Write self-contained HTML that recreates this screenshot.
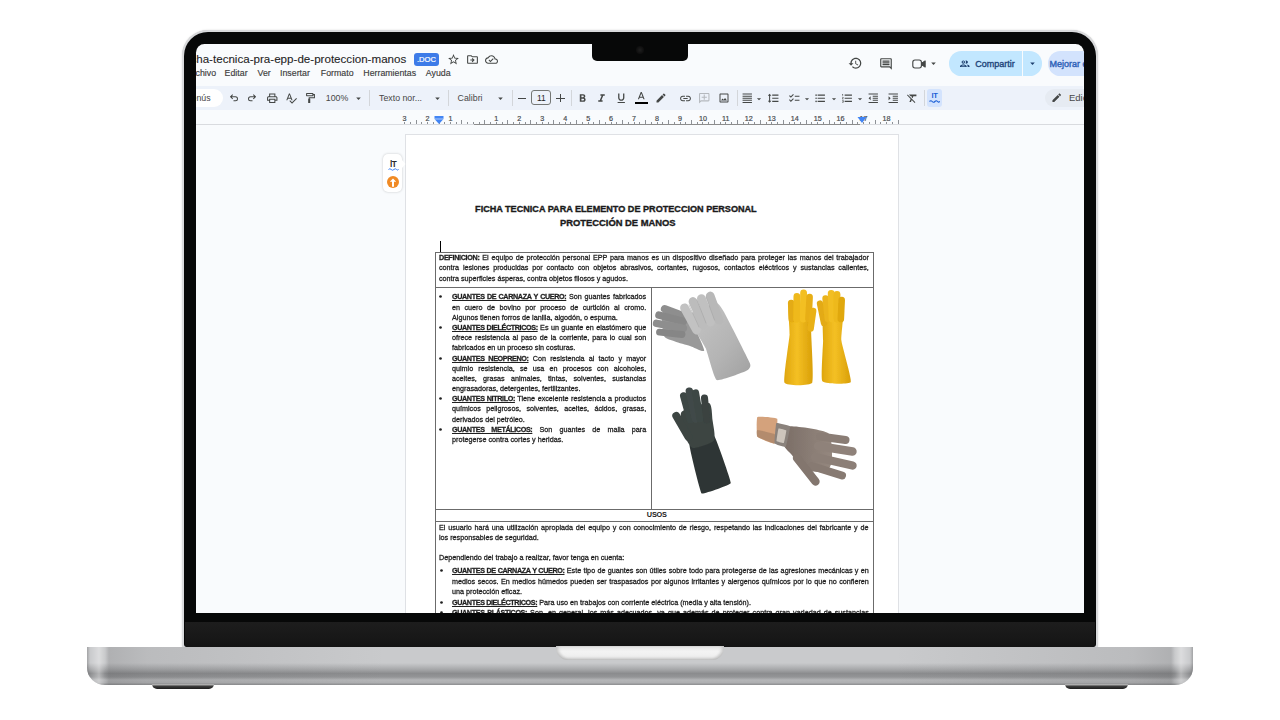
<!DOCTYPE html>
<html><head><meta charset="utf-8"><style>
html,body{margin:0;padding:0;}
body{width:1280px;height:720px;position:relative;overflow:hidden;background:#fff;font-family:"Liberation Sans",sans-serif;}
svg{display:block;}
</style></head><body>

<div style="position:absolute;left:182px;top:30px;width:916px;height:618px;background:#d9dadc;border-radius:26px 26px 3px 3px;box-shadow:0 0 1.2px rgba(120,120,120,.5);"></div>
<div style="position:absolute;left:184px;top:32px;width:912px;height:615px;background:#070808;border-radius:24px 24px 3px 3px;"></div>
<div style="position:absolute;left:185px;top:622px;width:910px;height:24.5px;background:linear-gradient(to bottom,#1d1d1d,#181818 60%,#131313);border-radius:0 0 3px 3px;"></div>
<div style="position:absolute;left:87px;top:647px;width:1106px;height:37.5px;border-radius:0 0 18px 18px / 0 0 17px 17px;background:linear-gradient(to bottom,#c9cacc 0px,#c9cacc 16px,#a9aaac 22px,#8b8c8e 26.5px,#949597 30px,#b5b6b8 33px,#afb0b2 35.5px,#939496 37.5px);"></div>
<div style="position:absolute;left:87px;top:647px;width:1106px;height:37.5px;border-radius:0 0 18px 18px / 0 0 17px 17px;background:linear-gradient(to right,rgba(60,60,62,.28) 0px,rgba(60,60,62,.0) 3px,rgba(255,255,255,.35) 12px,rgba(255,255,255,.0) 18px,rgba(60,60,62,.18) 22px,rgba(60,60,62,.10) 60px,rgba(60,60,62,.0) 300px,rgba(60,60,62,0) 806px,rgba(60,60,62,.10) 1046px,rgba(60,60,62,.18) 1084px,rgba(255,255,255,0) 1088px,rgba(255,255,255,.35) 1094px,rgba(60,60,62,0) 1103px,rgba(60,60,62,.28) 1106px);"></div>
<div style="position:absolute;left:556px;top:646px;width:168px;height:14px;border-radius:0 0 12px 12px / 0 0 12px 12px;background:linear-gradient(to bottom,#e8e8e8,#f3f3f3 40%,#ededed);box-shadow:inset 0 -2px 3px rgba(0,0,0,.12), inset 3px 0 3px rgba(0,0,0,.10), inset -3px 0 3px rgba(0,0,0,.10);"></div>
<div style="position:absolute;left:152px;top:684px;width:62px;height:5px;border-radius:0 0 6px 6px;background:linear-gradient(to bottom,#c9c9c9,#3a3a3a 50%,#1d1d1d);"></div>
<div style="position:absolute;left:1065px;top:684px;width:63px;height:5px;border-radius:0 0 6px 6px;background:linear-gradient(to bottom,#c9c9c9,#3a3a3a 50%,#1d1d1d);"></div>

<div id="scr" style="position:absolute;left:196px;top:44px;width:888px;height:568.5px;background:#f9fbfd;border-radius:8.5px 8.5px 0 0;overflow:hidden;">
<div style="position:absolute;left:-5.60px;top:8.30px;font-size:11.6px;line-height:13.328px;color:#1f1f1f;font-weight:normal;white-space:nowrap;-webkit-text-stroke:0.1px #1f1f1f;">cha-tecnica-pra-epp-de-proteccion-manos</div>
<div style="position:absolute;left:218.00px;top:9.00px;width:25.00px;height:13.00px;background:#3d7be8;border-radius:3px;"></div>
<div style="position:absolute;left:-69.50px;width:600px;text-align:center;top:11.92px;font-size:7.6px;line-height:8.732px;color:#ffffff;font-weight:normal;white-space:nowrap;-webkit-text-stroke:0.2px #fff;">.DOC</div>
<svg style="position:absolute;left:250.80px;top:9.20px;" width="13" height="13" viewBox="0 0 24 24"><path fill="#444746" d="M22 9.24l-7.19-.62L12 2 9.19 8.63 2 9.24l5.46 4.73L5.82 21 12 17.27 18.18 21l-1.63-7.03L22 9.24zM12 15.4l-3.76 2.27 1-4.28-3.32-2.88 4.380-.38L12 6.1l1.71 4.04 4.38.38-3.32 2.88 1 4.28L12 15.4z"/></svg>
<svg style="position:absolute;left:269.80px;top:9.20px;" width="13" height="13" viewBox="0 0 24 24"><path fill="#444746" d="M20 6h-8l-2-2H4c-1.1 0-2 .9-2 2v12c0 1.1.9 2 2 2h16c1.1 0 2-.9 2-2V8c0-1.1-.9-2-2-2zm0 12H4V6h5.17l2 2H20v10zm-7.84-6H8v2h4.16l-1.59 1.59L11.99 17 16 13.01 11.99 9l-1.41 1.41L12.16 12z"/></svg>
<svg style="position:absolute;left:289.20px;top:9.00px;" width="13" height="13" viewBox="0 0 24 24"><path fill="#444746" d="M19.35 10.04C18.67 6.59 15.640 4 12 4 9.11 4 6.6 5.64 5.35 8.04 2.34 8.36 0 10.91 0 14c0 3.31 2.69 6 6 6h13c2.76 0 5-2.24 5-5 0-2.64-2.05-4.78-4.65-4.96zM19 18H6c-2.21 0-4-1.79-4-4 0-2.05 1.53-3.76 3.56-3.97l1.07-.11.5-.95C8.08 7.14 9.94 6 12 6c2.62 0 4.88 1.86 5.39 4.43l.3 1.5 1.53.11c1.56.1 2.78 1.410 2.78 2.96 0 1.65-1.35 3-3 3zm-9-3.82l-2.09-2.09L6.5 13.5 10 17l6.01-6.01-1.42-1.41z"/></svg>
<div style="position:absolute;left:-3.40px;top:24.04px;font-size:8.8px;line-height:10.111px;color:#3c3c3c;font-weight:normal;white-space:nowrap;-webkit-text-stroke:0.15px #3c3c3c;">rchivo</div>
<div style="position:absolute;left:28.60px;top:24.04px;font-size:8.8px;line-height:10.111px;color:#3c3c3c;font-weight:normal;white-space:nowrap;-webkit-text-stroke:0.15px #3c3c3c;">Editar</div>
<div style="position:absolute;left:61.50px;top:24.04px;font-size:8.8px;line-height:10.111px;color:#3c3c3c;font-weight:normal;white-space:nowrap;-webkit-text-stroke:0.15px #3c3c3c;">Ver</div>
<div style="position:absolute;left:84.00px;top:24.04px;font-size:8.8px;line-height:10.111px;color:#3c3c3c;font-weight:normal;white-space:nowrap;-webkit-text-stroke:0.15px #3c3c3c;">Insertar</div>
<div style="position:absolute;left:124.80px;top:24.04px;font-size:8.8px;line-height:10.111px;color:#3c3c3c;font-weight:normal;white-space:nowrap;-webkit-text-stroke:0.15px #3c3c3c;">Formato</div>
<div style="position:absolute;left:167.30px;top:24.04px;font-size:8.8px;line-height:10.111px;color:#3c3c3c;font-weight:normal;white-space:nowrap;-webkit-text-stroke:0.15px #3c3c3c;">Herramientas</div>
<div style="position:absolute;left:229.80px;top:24.04px;font-size:8.8px;line-height:10.111px;color:#3c3c3c;font-weight:normal;white-space:nowrap;-webkit-text-stroke:0.15px #3c3c3c;">Ayuda</div>
<svg style="position:absolute;left:652.25px;top:12.25px;" width="14.5" height="14.5" viewBox="0 0 24 24"><path fill="#444746" d="M13 3c-4.97 0-9 4.03-9 9H1l3.89 3.89.07.14L9 12H6c0-3.87 3.13-7 7-7s7 3.13 7 7-3.13 7-7 7c-1.93 0-3.68-.79-4.94-2.06l-1.42 1.42C8.27 19.99 10.51 21 13 21c4.97 0 9-4.03 9-9s-4.03-9-9-9zm-1 5v5l4.28 2.54.72-1.21-3.5-2.08V8H12z"/></svg>
<svg style="position:absolute;left:682.80px;top:12.50px;" width="14" height="14" viewBox="0 0 24 24"><path fill="#444746" d="M21.99 4c0-1.1-.89-2-1.99-2H4c-1.1 0-2 .9-2 2v12c0 1.1.9 2 2 2h14l4 4-.01-18zM20 4v13.17L18.83 16H4V4h16zM6 12h12v2H6zm0-3h12v2H6zm0-3h12v2H6z"/></svg>
<svg style="position:absolute;left:714.5px;top:11.5px" width="16" height="16" viewBox="0 0 16 16"><rect x="1.8" y="4" width="8.6" height="8" rx="2.2" fill="none" stroke="#444746" stroke-width="1.15"/><path d="M10.4 7.3L14.2 4.8V11.2L10.4 8.7" fill="#444746" stroke="#444746" stroke-width="1" stroke-linejoin="round"/></svg>
<svg style="position:absolute;left:731.50px;top:14.00px;" width="11" height="11" viewBox="0 0 24 24"><path fill="#444746" d="M7 10l5 5 5-5z"/></svg>
<div style="position:absolute;left:753.30px;top:7.20px;width:93.00px;height:24.60px;background:#c2e7ff;border-radius:12.3px;"></div>
<div style="position:absolute;left:826.30px;top:7.20px;width:0.80px;height:24.60px;background:#f9fbfd;"></div>
<svg style="position:absolute;left:762.75px;top:13.75px;" width="11.5" height="11.5" viewBox="0 0 24 24"><path fill="#1d3f6e" d="M9 13.75c-2.34 0-7 1.17-7 3.5V19h14v-1.75c0-2.33-4.66-3.5-7-3.5zM4.34 17c.84-.58 2.87-1.25 4.66-1.25s3.82.67 4.66 1.25H4.34zM9 12c1.93 0 3.5-1.57 3.5-3.5S10.930 5 9 5 5.5 6.57 5.5 8.5 7.07 12 9 12zm0-5c.83 0 1.5.67 1.5 1.5S9.83 10 9 10s-1.5-.67-1.5-1.5S8.17 7 9 7zm7.04 6.81c1.16.84 1.96 1.96 1.96 3.44V19h4v-1.75c0-2.02-3.5-3.17-5.96-3.44zM15 12c1.93 0 3.5-1.57 3.5-3.5S16.93 5 15 5c-.54 0-1.040.13-1.5.35.63.89 1 1.98 1 3.15s-.37 2.26-1 3.15c.46.22.96.35 1.5.35z"/></svg>
<div style="position:absolute;left:779.30px;top:14.66px;font-size:9.0px;line-height:10.341px;color:#22467a;font-weight:normal;white-space:nowrap;-webkit-text-stroke:0.35px #22467a;">Compartir</div>
<svg style="position:absolute;left:831.00px;top:14.30px;" width="11" height="11" viewBox="0 0 24 24"><path fill="#1d3f6e" d="M7 10l5 5 5-5z"/></svg>
<div style="position:absolute;left:851.50px;top:7.20px;width:60.00px;height:24.60px;background:#d3e3fd;border-radius:12.3px;"></div>
<div style="position:absolute;left:853.50px;top:14.66px;font-size:9.0px;line-height:10.341px;color:#2f62b8;font-weight:normal;white-space:nowrap;-webkit-text-stroke:0.4px #2f62b8;">Mejorar e</div>
<div style="position:absolute;left:0.00px;top:41.50px;width:887.00px;height:24.50px;background:#edf2fa;"></div>
<div style="position:absolute;left:-16.00px;top:45.00px;width:43.00px;height:17.50px;background:#ffffff;border-radius:9px;"></div>
<div style="position:absolute;left:-4.50px;top:49.24px;font-size:8.8px;line-height:10.111px;color:#474747;font-weight:normal;white-space:nowrap;">enús</div>
<svg style="position:absolute;left:31.50px;top:48.30px;" width="12" height="12" viewBox="0 0 24 24"><path fill="#444746" d="M7.5 8.5H15a5 5 0 0 1 0 10H11v-2h4a3 3 0 0 0 0-6H7.5l2.6 2.6-1.4 1.4L3.7 9.5l5-5 1.4 1.4z"/></svg>
<svg style="position:absolute;left:50.30px;top:48.30px;" width="12" height="12" viewBox="0 0 24 24"><path fill="#444746" d="M16.5 8.5H9a5 5 0 0 0 0 10h4v-2H9a3 3 0 0 1 0-6h7.5l-2.6 2.6 1.4 1.4 5-5-5-5-1.4 1.4z"/></svg>
<svg style="position:absolute;left:69.75px;top:48.05px;" width="12.5" height="12.5" viewBox="0 0 24 24"><path fill="#444746" d="M19 8h-1V3H6v5H5c-1.66 0-3 1.34-3 3v6h4v4h12v-4h4v-6c0-1.66-1.34-3-3-3zM8 5h8v3H8V5zm8 14H8v-4h8v4zm2-4v-2H6v2H4v-4c0-.55.45-1 1-1h14c.55 0 1 .45 1 1v4h-2z"/></svg>
<svg style="position:absolute;left:89.45px;top:48.05px;" width="12.5" height="12.5" viewBox="0 0 24 24"><path fill="#444746" d="M12.45 16h2.09L9.43 3H7.57L2.46 16h2.09l1.12-3h5.64l1.14 3zm-6.02-5L8.5 5.48 10.57 11H6.43zm15.16.59l-8.09 8.09L9.83 16l-1.41 1.41 5.09 5.09L23 13l-1.41-1.41z"/></svg>
<svg style="position:absolute;left:108.15px;top:48.05px;" width="12.5" height="12.5" viewBox="0 0 24 24"><path fill="#444746" d="M18 4V3c0-.55-.45-1-1-1H5c-.55 0-1 .45-1 1v4c0 .55.45 1 1 1h12c.55 0 1-.45 1-1V6h1v4H9v3H8v8h4v-8h-1v-1h10V4h-3zm-2 2H6V4h10v2z"/></svg>
<div style="position:absolute;left:129.80px;top:49.34px;font-size:8.8px;line-height:10.111px;color:#474747;font-weight:normal;white-space:nowrap;">100%</div>
<svg style="position:absolute;left:157.00px;top:49.00px;" width="11" height="11" viewBox="0 0 24 24"><path fill="#444746" d="M7 10l5 5 5-5z"/></svg>
<div style="position:absolute;left:173.00px;top:46.00px;width:0.80px;height:16.00px;background:#d3d6da;"></div>
<div style="position:absolute;left:252.20px;top:46.00px;width:0.80px;height:16.00px;background:#d3d6da;"></div>
<div style="position:absolute;left:316.00px;top:46.00px;width:0.80px;height:16.00px;background:#d3d6da;"></div>
<div style="position:absolute;left:374.70px;top:46.00px;width:0.80px;height:16.00px;background:#d3d6da;"></div>
<div style="position:absolute;left:541.00px;top:46.00px;width:0.80px;height:16.00px;background:#d3d6da;"></div>
<div style="position:absolute;left:727.80px;top:46.00px;width:0.80px;height:16.00px;background:#d3d6da;"></div>
<div style="position:absolute;left:183.00px;top:49.34px;font-size:8.8px;line-height:10.111px;color:#474747;font-weight:normal;white-space:nowrap;">Texto nor...</div>
<svg style="position:absolute;left:235.50px;top:49.00px;" width="11" height="11" viewBox="0 0 24 24"><path fill="#444746" d="M7 10l5 5 5-5z"/></svg>
<div style="position:absolute;left:261.60px;top:49.34px;font-size:8.8px;line-height:10.111px;color:#474747;font-weight:normal;white-space:nowrap;">Calibri</div>
<svg style="position:absolute;left:298.90px;top:49.00px;" width="11" height="11" viewBox="0 0 24 24"><path fill="#444746" d="M7 10l5 5 5-5z"/></svg>
<div style="position:absolute;left:321.50px;top:53.80px;width:8.50px;height:1.00px;background:#444746;"></div>
<div style="position:absolute;left:335.30px;top:46.20px;width:20.10px;height:14.40px;border:1px solid #747775;border-radius:3px;box-sizing:border-box;"></div>
<div style="position:absolute;left:45.30px;width:600px;text-align:center;top:49.61px;font-size:8.5px;line-height:9.767px;color:#1f1f1f;font-weight:normal;white-space:nowrap;">11</div>
<div style="position:absolute;left:360.00px;top:53.80px;width:8.50px;height:1.00px;background:#444746;"></div>
<div style="position:absolute;left:363.75px;top:49.55px;width:1.00px;height:8.50px;background:#444746;"></div>
<svg style="position:absolute;left:379.80px;top:47.80px;" width="13" height="13" viewBox="0 0 24 24"><path fill="#444746" d="M15.6 10.79c.97-.67 1.65-1.77 1.65-2.79 0-2.26-1.75-4-4-4H7v14h7.04c2.09 0 3.71-1.7 3.71-3.79 0-1.52-.86-2.82-2.15-3.42zM10 6.5h3c.83 0 1.5.67 1.5 1.5s-.67 1.5-1.5 1.5h-3v-3zm3.5 9H10v-3h3.5c.83 0 1.5.67 1.5 1.5s-.67 1.5-1.5 1.5z"/></svg>
<svg style="position:absolute;left:398.50px;top:47.80px;" width="13" height="13" viewBox="0 0 24 24"><path fill="#444746" d="M10 4v3h2.21l-3.42 8H6v3h8v-3h-2.21l3.42-8H18V4z"/></svg>
<svg style="position:absolute;left:418.55px;top:48.05px;" width="12.5" height="12.5" viewBox="0 0 24 24"><path fill="#444746" d="M12 17c3.31 0 6-2.69 6-6V3h-2.5v8c0 1.93-1.57 3.5-3.5 3.5S8.5 12.93 8.5 11V3H6v8c0 3.31 2.69 6 6 6zm-7 2v2h14v-2H5z"/></svg>
<svg style="position:absolute;left:438.75px;top:47.05px;" width="12.5" height="12.5" viewBox="0 0 24 24"><path fill="#444746" d="M11 2L5.5 16h2.25l1.12-3h6.25l1.12 3h2.25L13 2h-2zm-1.38 9L12 4.67 14.38 11H9.62z"/></svg>
<div style="position:absolute;left:438.50px;top:57.50px;width:13.00px;height:2.00px;background:#000;"></div>
<svg style="position:absolute;left:459.00px;top:47.80px;" width="12" height="12" viewBox="0 0 24 24"><path fill="#444746" d="M20.71 7.04c.39-.39.39-1.04 0-1.41l-2.34-2.34c-.37-.39-1.02-.39-1.41 0l-1.84 1.83 3.75 3.75M3 17.25V21h3.75L17.81 9.93l-3.75-3.75L3 17.25z"/></svg>
<svg style="position:absolute;left:482.90px;top:47.80px;" width="13" height="13" viewBox="0 0 24 24"><path fill="#444746" d="M3.9 12c0-1.71 1.39-3.1 3.1-3.1h4V7H7c-2.76 0-5 2.24-5 5s2.24 5 5 5h4v-1.9H7c-1.71 0-3.1-1.39-3.1-3.1zM8 13h8v-2H8v2zm9-6h-4v1.9h4c1.71 0 3.1 1.39 3.1 3.1s-1.39 3.1-3.1 3.1h-4V17h4c2.76 0 5-2.24 5-5s-2.24-5-5-5z"/></svg>
<svg style="position:absolute;left:502.45px;top:48.05px;" width="12.5" height="12.5" viewBox="0 0 24 24"><path fill="#b5b9be" d="M20 2H4c-1.1 0-2 .9-2 2v18l4-4h14c1.1 0 2-.9 2-2V4c0-1.1-.9-2-2-2zm0 14H5.17L4 17.17V4h16v12zM11 5h2v4h4v2h-4v4h-2v-4H7V9h4z"/></svg>
<svg style="position:absolute;left:522.40px;top:48.30px;" width="12" height="12" viewBox="0 0 24 24"><path fill="#444746" d="M19 3H5c-1.1 0-2 .9-2 2v14c0 1.1.9 2 2 2h14c1.1 0 2-.9 2-2V5c0-1.1-.9-2-2-2zm0 16H5V5h14v14zm-4.86-7.14l-3 3.86L9 13.14 6 17h12z"/></svg>
<svg style="position:absolute;left:545.05px;top:48.05px;" width="12.5" height="12.5" viewBox="0 0 24 24"><path fill="#444746" d="M3 21h18v-2H3v2zm0-4h18v-2H3v2zm0-4h18v-2H3v2zm0-4h18V7H3v2zm0-6v2h18V3H3z"/></svg>
<svg style="position:absolute;left:557.50px;top:49.50px;" width="10" height="10" viewBox="0 0 24 24"><path fill="#444746" d="M7 10l5 5 5-5z"/></svg>
<svg style="position:absolute;left:571.35px;top:48.05px;" width="12.5" height="12.5" viewBox="0 0 24 24"><path fill="#444746" d="M6 7h2.5L5 3.5 1.5 7H4v10H1.5L5 20.5 8.5 17H6V7zm4-2v2h12V5H10zm0 14h12v-2H10v2zm0-6h12v-2H10v2z"/></svg>
<svg style="position:absolute;left:591.95px;top:48.05px;" width="12.5" height="12.5" viewBox="0 0 24 24"><path fill="#444746" d="M22 7h-9v2h9V7zm0 8h-9v2h9v-2zM5.54 11L2 7.46l1.41-1.41 2.12 2.12 4.24-4.24 1.41 1.41L5.54 11zm0 8L2 15.46l1.41-1.41 2.12 2.12 4.24-4.24 1.41 1.41L5.54 19z"/></svg>
<svg style="position:absolute;left:605.80px;top:49.50px;" width="10" height="10" viewBox="0 0 24 24"><path fill="#444746" d="M7 10l5 5 5-5z"/></svg>
<svg style="position:absolute;left:618.25px;top:48.05px;" width="12.5" height="12.5" viewBox="0 0 24 24"><path fill="#444746" d="M4 10.5c-.83 0-1.5.67-1.5 1.5s.67 1.5 1.5 1.5 1.5-.67 1.5-1.5-.67-1.5-1.5-1.5zm0-6c-.83 0-1.5.67-1.5 1.5S3.17 7.5 4 7.5 5.5 6.83 5.5 6 4.83 4.5 4 4.5zm0 12c-.83 0-1.5.68-1.5 1.5s.68 1.5 1.5 1.5 1.5-.68 1.5-1.5-.67-1.5-1.5-1.5zM7 19h14v-2H7v2zm0-6h14v-2H7v2zm0-8v2h14V5H7z"/></svg>
<svg style="position:absolute;left:632.60px;top:49.50px;" width="10" height="10" viewBox="0 0 24 24"><path fill="#444746" d="M7 10l5 5 5-5z"/></svg>
<svg style="position:absolute;left:644.75px;top:48.05px;" width="12.5" height="12.5" viewBox="0 0 24 24"><path fill="#444746" d="M2 17h2v.5H3v1h1v.5H2v1h3v-4H2v1zm1-9h1V4H2v1h1v3zm-1 3h1.8L2 13.1v.9h3v-1H3.2L5 10.9V10H2v1zm5-6v2h14V5H7zm0 14h14v-2H7v2zm0-6h14v-2H7v2z"/></svg>
<svg style="position:absolute;left:659.20px;top:49.50px;" width="10" height="10" viewBox="0 0 24 24"><path fill="#444746" d="M7 10l5 5 5-5z"/></svg>
<svg style="position:absolute;left:671.35px;top:48.05px;" width="12.5" height="12.5" viewBox="0 0 24 24"><path fill="#444746" d="M11 17h10v-2H11v2zm-8-5l4 4V8l-4 4zm0 9h18v-2H3v2zM3 3v2h18V3H3zm8 6h10V7H11v2zm0 4h10v-2H11v2z"/></svg>
<svg style="position:absolute;left:690.75px;top:48.05px;" width="12.5" height="12.5" viewBox="0 0 24 24"><path fill="#444746" d="M3 21h18v-2H3v2zM3 8v8l4-4-4-4zm8 9h10v-2H11v2zM3 3v2h18V3H3zm8 6h10V7H11v2zm0 4h10v-2H11v2z"/></svg>
<svg style="position:absolute;left:709.75px;top:48.05px;" width="12.5" height="12.5" viewBox="0 0 24 24"><path fill="#444746" d="M3.27 5L2 6.27l6.97 6.97L6.5 19h3l1.57-3.66L16.73 21 18 19.73 3.55 5.27 3.27 5zM6 5v.18L8.82 8h2.4l-.72 1.68 2.1 2.1L14.21 8H20V5H6z"/></svg>
<div style="position:absolute;left:730.70px;top:44.50px;width:15.60px;height:18.50px;background:#d3e3fd;border-radius:3px;"></div>
<div style="position:absolute;left:438.60px;width:600px;text-align:center;top:47.92px;font-size:7.6px;line-height:8.732px;color:#1a5fd6;font-weight:bold;white-space:nowrap;letter-spacing:-0.4px;">lT</div>
<svg style="position:absolute;left:733.3px;top:55.599999999999994px" width="11" height="3" viewBox="0 0 11 3"><path d="M0.5 1.5Q1.9 0 3.2 1.5T5.9 1.5T8.6 1.5T10.5 1.2" fill="none" stroke="#1a5fd6" stroke-width="1.1"/></svg>
<div style="position:absolute;left:849.00px;top:45.00px;width:60.00px;height:18.00px;background:#e6ebf2;border-radius:9px;"></div>
<svg style="position:absolute;left:855.25px;top:48.25px;" width="11.5" height="11.5" viewBox="0 0 24 24"><path fill="#444746" d="M20.71 7.04c.39-.39.39-1.04 0-1.41l-2.34-2.34c-.37-.39-1.02-.39-1.41 0l-1.84 1.83 3.75 3.75M3 17.25V21h3.75L17.81 9.93l-3.75-3.75L3 17.25z"/></svg>
<div style="position:absolute;left:873.00px;top:49.20px;font-size:9.5px;line-height:10.915px;color:#474747;font-weight:normal;white-space:nowrap;">Edición</div>
<div style="position:absolute;left:0.00px;top:79.80px;width:888.00px;height:1.00px;background:#d9dbdf;"></div>
<div style="position:absolute;left:278.30px;top:79.60px;width:386.00px;height:1.10px;background:#8c8c8c;"></div>
<div style="position:absolute;left:-91.45px;width:600px;text-align:center;top:70.98px;font-size:7.2px;line-height:8.273px;color:#4a4d51;font-weight:normal;white-space:nowrap;-webkit-text-stroke:0.2px #4a4d51;">3</div>
<div style="position:absolute;left:-68.50px;width:600px;text-align:center;top:70.98px;font-size:7.2px;line-height:8.273px;color:#4a4d51;font-weight:normal;white-space:nowrap;-webkit-text-stroke:0.2px #4a4d51;">2</div>
<div style="position:absolute;left:-45.55px;width:600px;text-align:center;top:70.98px;font-size:7.2px;line-height:8.273px;color:#4a4d51;font-weight:normal;white-space:nowrap;-webkit-text-stroke:0.2px #4a4d51;">1</div>
<div style="position:absolute;left:0.35px;width:600px;text-align:center;top:70.98px;font-size:7.2px;line-height:8.273px;color:#4a4d51;font-weight:normal;white-space:nowrap;-webkit-text-stroke:0.2px #4a4d51;">1</div>
<div style="position:absolute;left:23.30px;width:600px;text-align:center;top:70.98px;font-size:7.2px;line-height:8.273px;color:#4a4d51;font-weight:normal;white-space:nowrap;-webkit-text-stroke:0.2px #4a4d51;">2</div>
<div style="position:absolute;left:46.25px;width:600px;text-align:center;top:70.98px;font-size:7.2px;line-height:8.273px;color:#4a4d51;font-weight:normal;white-space:nowrap;-webkit-text-stroke:0.2px #4a4d51;">3</div>
<div style="position:absolute;left:69.20px;width:600px;text-align:center;top:70.98px;font-size:7.2px;line-height:8.273px;color:#4a4d51;font-weight:normal;white-space:nowrap;-webkit-text-stroke:0.2px #4a4d51;">4</div>
<div style="position:absolute;left:92.15px;width:600px;text-align:center;top:70.98px;font-size:7.2px;line-height:8.273px;color:#4a4d51;font-weight:normal;white-space:nowrap;-webkit-text-stroke:0.2px #4a4d51;">5</div>
<div style="position:absolute;left:115.10px;width:600px;text-align:center;top:70.98px;font-size:7.2px;line-height:8.273px;color:#4a4d51;font-weight:normal;white-space:nowrap;-webkit-text-stroke:0.2px #4a4d51;">6</div>
<div style="position:absolute;left:138.05px;width:600px;text-align:center;top:70.98px;font-size:7.2px;line-height:8.273px;color:#4a4d51;font-weight:normal;white-space:nowrap;-webkit-text-stroke:0.2px #4a4d51;">7</div>
<div style="position:absolute;left:161.00px;width:600px;text-align:center;top:70.98px;font-size:7.2px;line-height:8.273px;color:#4a4d51;font-weight:normal;white-space:nowrap;-webkit-text-stroke:0.2px #4a4d51;">8</div>
<div style="position:absolute;left:183.95px;width:600px;text-align:center;top:70.98px;font-size:7.2px;line-height:8.273px;color:#4a4d51;font-weight:normal;white-space:nowrap;-webkit-text-stroke:0.2px #4a4d51;">9</div>
<div style="position:absolute;left:206.90px;width:600px;text-align:center;top:70.98px;font-size:7.2px;line-height:8.273px;color:#4a4d51;font-weight:normal;white-space:nowrap;-webkit-text-stroke:0.2px #4a4d51;">10</div>
<div style="position:absolute;left:229.85px;width:600px;text-align:center;top:70.98px;font-size:7.2px;line-height:8.273px;color:#4a4d51;font-weight:normal;white-space:nowrap;-webkit-text-stroke:0.2px #4a4d51;">11</div>
<div style="position:absolute;left:252.80px;width:600px;text-align:center;top:70.98px;font-size:7.2px;line-height:8.273px;color:#4a4d51;font-weight:normal;white-space:nowrap;-webkit-text-stroke:0.2px #4a4d51;">12</div>
<div style="position:absolute;left:275.75px;width:600px;text-align:center;top:70.98px;font-size:7.2px;line-height:8.273px;color:#4a4d51;font-weight:normal;white-space:nowrap;-webkit-text-stroke:0.2px #4a4d51;">13</div>
<div style="position:absolute;left:298.70px;width:600px;text-align:center;top:70.98px;font-size:7.2px;line-height:8.273px;color:#4a4d51;font-weight:normal;white-space:nowrap;-webkit-text-stroke:0.2px #4a4d51;">14</div>
<div style="position:absolute;left:321.65px;width:600px;text-align:center;top:70.98px;font-size:7.2px;line-height:8.273px;color:#4a4d51;font-weight:normal;white-space:nowrap;-webkit-text-stroke:0.2px #4a4d51;">15</div>
<div style="position:absolute;left:344.60px;width:600px;text-align:center;top:70.98px;font-size:7.2px;line-height:8.273px;color:#4a4d51;font-weight:normal;white-space:nowrap;-webkit-text-stroke:0.2px #4a4d51;">16</div>
<div style="position:absolute;left:367.55px;width:600px;text-align:center;top:70.98px;font-size:7.2px;line-height:8.273px;color:#4a4d51;font-weight:normal;white-space:nowrap;-webkit-text-stroke:0.2px #4a4d51;">17</div>
<div style="position:absolute;left:390.50px;width:600px;text-align:center;top:70.98px;font-size:7.2px;line-height:8.273px;color:#4a4d51;font-weight:normal;white-space:nowrap;-webkit-text-stroke:0.2px #4a4d51;">18</div>
<div style="position:absolute;left:208.10px;top:78.20px;width:0.90px;height:2.20px;background:#8d9196;"></div>
<div style="position:absolute;left:213.84px;top:78.20px;width:0.90px;height:2.20px;background:#8d9196;"></div>
<div style="position:absolute;left:219.57px;top:76.20px;width:0.90px;height:4.20px;background:#8d9196;"></div>
<div style="position:absolute;left:225.31px;top:78.20px;width:0.90px;height:2.20px;background:#8d9196;"></div>
<div style="position:absolute;left:231.05px;top:78.20px;width:0.90px;height:2.20px;background:#8d9196;"></div>
<div style="position:absolute;left:236.79px;top:78.20px;width:0.90px;height:2.20px;background:#8d9196;"></div>
<div style="position:absolute;left:242.52px;top:76.20px;width:0.90px;height:4.20px;background:#8d9196;"></div>
<div style="position:absolute;left:248.26px;top:78.20px;width:0.90px;height:2.20px;background:#8d9196;"></div>
<div style="position:absolute;left:254.00px;top:78.20px;width:0.90px;height:2.20px;background:#8d9196;"></div>
<div style="position:absolute;left:259.74px;top:78.20px;width:0.90px;height:2.20px;background:#8d9196;"></div>
<div style="position:absolute;left:265.47px;top:76.20px;width:0.90px;height:4.20px;background:#8d9196;"></div>
<div style="position:absolute;left:271.21px;top:78.20px;width:0.90px;height:2.20px;background:#8d9196;"></div>
<div style="position:absolute;left:276.95px;top:78.20px;width:0.90px;height:2.20px;background:#8d9196;"></div>
<div style="position:absolute;left:282.69px;top:78.20px;width:0.90px;height:2.20px;background:#8d9196;"></div>
<div style="position:absolute;left:288.43px;top:76.20px;width:0.90px;height:4.20px;background:#8d9196;"></div>
<div style="position:absolute;left:294.16px;top:78.20px;width:0.90px;height:2.20px;background:#8d9196;"></div>
<div style="position:absolute;left:299.90px;top:78.20px;width:0.90px;height:2.20px;background:#8d9196;"></div>
<div style="position:absolute;left:305.64px;top:78.20px;width:0.90px;height:2.20px;background:#8d9196;"></div>
<div style="position:absolute;left:311.38px;top:76.20px;width:0.90px;height:4.20px;background:#8d9196;"></div>
<div style="position:absolute;left:317.11px;top:78.20px;width:0.90px;height:2.20px;background:#8d9196;"></div>
<div style="position:absolute;left:322.85px;top:78.20px;width:0.90px;height:2.20px;background:#8d9196;"></div>
<div style="position:absolute;left:328.59px;top:78.20px;width:0.90px;height:2.20px;background:#8d9196;"></div>
<div style="position:absolute;left:334.32px;top:76.20px;width:0.90px;height:4.20px;background:#8d9196;"></div>
<div style="position:absolute;left:340.06px;top:78.20px;width:0.90px;height:2.20px;background:#8d9196;"></div>
<div style="position:absolute;left:345.80px;top:78.20px;width:0.90px;height:2.20px;background:#8d9196;"></div>
<div style="position:absolute;left:351.54px;top:78.20px;width:0.90px;height:2.20px;background:#8d9196;"></div>
<div style="position:absolute;left:357.27px;top:76.20px;width:0.90px;height:4.20px;background:#8d9196;"></div>
<div style="position:absolute;left:363.01px;top:78.20px;width:0.90px;height:2.20px;background:#8d9196;"></div>
<div style="position:absolute;left:368.75px;top:78.20px;width:0.90px;height:2.20px;background:#8d9196;"></div>
<div style="position:absolute;left:374.49px;top:78.20px;width:0.90px;height:2.20px;background:#8d9196;"></div>
<div style="position:absolute;left:380.22px;top:76.20px;width:0.90px;height:4.20px;background:#8d9196;"></div>
<div style="position:absolute;left:385.96px;top:78.20px;width:0.90px;height:2.20px;background:#8d9196;"></div>
<div style="position:absolute;left:391.70px;top:78.20px;width:0.90px;height:2.20px;background:#8d9196;"></div>
<div style="position:absolute;left:397.44px;top:78.20px;width:0.90px;height:2.20px;background:#8d9196;"></div>
<div style="position:absolute;left:403.17px;top:76.20px;width:0.90px;height:4.20px;background:#8d9196;"></div>
<div style="position:absolute;left:408.91px;top:78.20px;width:0.90px;height:2.20px;background:#8d9196;"></div>
<div style="position:absolute;left:414.65px;top:78.20px;width:0.90px;height:2.20px;background:#8d9196;"></div>
<div style="position:absolute;left:420.39px;top:78.20px;width:0.90px;height:2.20px;background:#8d9196;"></div>
<div style="position:absolute;left:426.12px;top:76.20px;width:0.90px;height:4.20px;background:#8d9196;"></div>
<div style="position:absolute;left:431.86px;top:78.20px;width:0.90px;height:2.20px;background:#8d9196;"></div>
<div style="position:absolute;left:437.60px;top:78.20px;width:0.90px;height:2.20px;background:#8d9196;"></div>
<div style="position:absolute;left:443.34px;top:78.20px;width:0.90px;height:2.20px;background:#8d9196;"></div>
<div style="position:absolute;left:449.07px;top:76.20px;width:0.90px;height:4.20px;background:#8d9196;"></div>
<div style="position:absolute;left:454.81px;top:78.20px;width:0.90px;height:2.20px;background:#8d9196;"></div>
<div style="position:absolute;left:460.55px;top:78.20px;width:0.90px;height:2.20px;background:#8d9196;"></div>
<div style="position:absolute;left:466.29px;top:78.20px;width:0.90px;height:2.20px;background:#8d9196;"></div>
<div style="position:absolute;left:472.02px;top:76.20px;width:0.90px;height:4.20px;background:#8d9196;"></div>
<div style="position:absolute;left:477.76px;top:78.20px;width:0.90px;height:2.20px;background:#8d9196;"></div>
<div style="position:absolute;left:483.50px;top:78.20px;width:0.90px;height:2.20px;background:#8d9196;"></div>
<div style="position:absolute;left:489.24px;top:78.20px;width:0.90px;height:2.20px;background:#8d9196;"></div>
<div style="position:absolute;left:494.97px;top:76.20px;width:0.90px;height:4.20px;background:#8d9196;"></div>
<div style="position:absolute;left:500.71px;top:78.20px;width:0.90px;height:2.20px;background:#8d9196;"></div>
<div style="position:absolute;left:506.45px;top:78.20px;width:0.90px;height:2.20px;background:#8d9196;"></div>
<div style="position:absolute;left:512.19px;top:78.20px;width:0.90px;height:2.20px;background:#8d9196;"></div>
<div style="position:absolute;left:517.92px;top:76.20px;width:0.90px;height:4.20px;background:#8d9196;"></div>
<div style="position:absolute;left:523.66px;top:78.20px;width:0.90px;height:2.20px;background:#8d9196;"></div>
<div style="position:absolute;left:529.40px;top:78.20px;width:0.90px;height:2.20px;background:#8d9196;"></div>
<div style="position:absolute;left:535.14px;top:78.20px;width:0.90px;height:2.20px;background:#8d9196;"></div>
<div style="position:absolute;left:540.88px;top:76.20px;width:0.90px;height:4.20px;background:#8d9196;"></div>
<div style="position:absolute;left:546.61px;top:78.20px;width:0.90px;height:2.20px;background:#8d9196;"></div>
<div style="position:absolute;left:552.35px;top:78.20px;width:0.90px;height:2.20px;background:#8d9196;"></div>
<div style="position:absolute;left:558.09px;top:78.20px;width:0.90px;height:2.20px;background:#8d9196;"></div>
<div style="position:absolute;left:563.82px;top:76.20px;width:0.90px;height:4.20px;background:#8d9196;"></div>
<div style="position:absolute;left:569.56px;top:78.20px;width:0.90px;height:2.20px;background:#8d9196;"></div>
<div style="position:absolute;left:575.30px;top:78.20px;width:0.90px;height:2.20px;background:#8d9196;"></div>
<div style="position:absolute;left:581.04px;top:78.20px;width:0.90px;height:2.20px;background:#8d9196;"></div>
<div style="position:absolute;left:586.77px;top:76.20px;width:0.90px;height:4.20px;background:#8d9196;"></div>
<div style="position:absolute;left:592.51px;top:78.20px;width:0.90px;height:2.20px;background:#8d9196;"></div>
<div style="position:absolute;left:598.25px;top:78.20px;width:0.90px;height:2.20px;background:#8d9196;"></div>
<div style="position:absolute;left:603.99px;top:78.20px;width:0.90px;height:2.20px;background:#8d9196;"></div>
<div style="position:absolute;left:609.72px;top:76.20px;width:0.90px;height:4.20px;background:#8d9196;"></div>
<div style="position:absolute;left:615.46px;top:78.20px;width:0.90px;height:2.20px;background:#8d9196;"></div>
<div style="position:absolute;left:621.20px;top:78.20px;width:0.90px;height:2.20px;background:#8d9196;"></div>
<div style="position:absolute;left:626.94px;top:78.20px;width:0.90px;height:2.20px;background:#8d9196;"></div>
<div style="position:absolute;left:632.67px;top:76.20px;width:0.90px;height:4.20px;background:#8d9196;"></div>
<div style="position:absolute;left:638.41px;top:78.20px;width:0.90px;height:2.20px;background:#8d9196;"></div>
<div style="position:absolute;left:644.15px;top:78.20px;width:0.90px;height:2.20px;background:#8d9196;"></div>
<div style="position:absolute;left:649.89px;top:78.20px;width:0.90px;height:2.20px;background:#8d9196;"></div>
<div style="position:absolute;left:655.62px;top:76.20px;width:0.90px;height:4.20px;background:#8d9196;"></div>
<div style="position:absolute;left:661.36px;top:78.20px;width:0.90px;height:2.20px;background:#8d9196;"></div>
<div style="position:absolute;left:667.10px;top:78.20px;width:0.90px;height:2.20px;background:#8d9196;"></div>
<div style="position:absolute;left:672.84px;top:78.20px;width:0.90px;height:2.20px;background:#8d9196;"></div>
<div style="position:absolute;left:678.57px;top:76.20px;width:0.90px;height:4.20px;background:#8d9196;"></div>
<div style="position:absolute;left:684.31px;top:78.20px;width:0.90px;height:2.20px;background:#8d9196;"></div>
<div style="position:absolute;left:690.05px;top:78.20px;width:0.90px;height:2.20px;background:#8d9196;"></div>
<div style="position:absolute;left:695.79px;top:78.20px;width:0.90px;height:2.20px;background:#8d9196;"></div>
<div style="position:absolute;left:701.52px;top:76.20px;width:0.90px;height:4.20px;background:#8d9196;"></div>
<svg style="position:absolute;left:238.3px;top:71.5px" width="10" height="8" viewBox="0 0 10 8"><path d="M0.5 0h9v3L5 8 0.5 3z" fill="#4285f4"/><rect x="0.5" y="2.6" width="9" height="0.8" fill="#fff" opacity=".7"/></svg>
<svg style="position:absolute;left:660.7px;top:73px" width="10" height="7" viewBox="0 0 10 7"><path d="M0.5 0h9L5 6z" fill="#4285f4"/></svg>
<div style="position:absolute;left:209.40px;top:90.20px;width:493.40px;height:500.00px;background:#ffffff;border:1px solid #dfe1e5;box-sizing:border-box;"></div>
<div style="position:absolute;left:187.20px;top:109.60px;width:19.00px;height:38.00px;background:#fff;border-radius:5px;box-shadow:0 0 2.5px rgba(0,0,0,.22);"></div>
<svg style="position:absolute;left:205.5px;top:116px" width="4" height="8" viewBox="0 0 4 8"><path d="M0 0L3.5 4L0 8z" fill="#fff"/></svg>
<div style="position:absolute;left:-102.80px;width:600px;text-align:center;top:115.78px;font-size:8.2px;line-height:9.422px;color:#2a2a2a;font-weight:bold;white-space:nowrap;letter-spacing:-0.4px;">lT</div>
<svg style="position:absolute;left:192px;top:123.80000000000001px" width="11" height="3" viewBox="0 0 11 3"><path d="M0.5 1.5Q1.9 0 3.2 1.5T5.9 1.5T8.6 1.5T10.5 1.2" fill="none" stroke="#3b82f6" stroke-width="1"/></svg>
<div style="position:absolute;left:191px;top:132px;width:12px;height:12px;border-radius:50%;background:#f08a24;"></div>
<svg style="position:absolute;left:193px;top:133.5px" width="8" height="9" viewBox="0 0 8 9"><path d="M4 0.5L7.2 3.8H5v5H3v-5H0.8z" fill="#fff"/></svg>
<div style="position:absolute;left:119.90px;width:600px;text-align:center;top:159.76px;font-size:9.1px;line-height:10.456px;color:#1a1a1a;font-weight:bold;white-space:nowrap;-webkit-text-stroke:0.35px #1a1a1a;">FICHA TECNICA PARA ELEMENTO DE PROTECCION PERSONAL</div>
<div style="position:absolute;left:121.80px;width:600px;text-align:center;top:173.99px;font-size:9.4px;line-height:10.801px;color:#1a1a1a;font-weight:bold;white-space:nowrap;-webkit-text-stroke:0.35px #1a1a1a;">PROTECCIÓN DE MANOS</div>
<div style="position:absolute;left:244.20px;top:196.80px;width:1.00px;height:11.50px;background:#000;"></div>
<div style="position:absolute;left:238.80px;top:207.50px;width:439.20px;height:1.00px;background:#6b6b6b;"></div>
<div style="position:absolute;left:238.80px;top:242.70px;width:439.20px;height:1.00px;background:#6b6b6b;"></div>
<div style="position:absolute;left:238.80px;top:464.90px;width:439.20px;height:1.00px;background:#6b6b6b;"></div>
<div style="position:absolute;left:238.80px;top:476.70px;width:439.20px;height:1.00px;background:#6b6b6b;"></div>
<div style="position:absolute;left:238.80px;top:207.50px;width:1.00px;height:380.00px;background:#6b6b6b;"></div>
<div style="position:absolute;left:677.00px;top:207.50px;width:1.00px;height:380.00px;background:#6b6b6b;"></div>
<div style="position:absolute;left:455.00px;top:242.70px;width:1.00px;height:222.70px;background:#6b6b6b;"></div>
<div style="position:absolute;left:243.20px;top:208.96px;width:477.56px;font-size:8.0px;line-height:9.192px;color:#1f1f1f;white-space:nowrap;-webkit-text-stroke:0.3px #1f1f1f;transform:scaleX(0.9);transform-origin:0 0;text-align:justify;text-align-last:justify;"><b style="letter-spacing:-0.35px;">DEFINICION:</b> El equipo de protección personal EPP para manos es un dispositivo diseñado para proteger las manos del trabajador</div>
<div style="position:absolute;left:243.20px;top:219.36px;width:477.56px;font-size:8.0px;line-height:9.192px;color:#1f1f1f;white-space:nowrap;-webkit-text-stroke:0.3px #1f1f1f;transform:scaleX(0.9);transform-origin:0 0;text-align:justify;text-align-last:justify;">contra lesiones producidas por contacto con objetos abrasivos, cortantes, rugosos, contactos eléctricos y sustancias calientes,</div>
<div style="position:absolute;left:243.20px;top:229.66px;width:477.56px;font-size:8.0px;line-height:9.192px;color:#1f1f1f;white-space:nowrap;-webkit-text-stroke:0.3px #1f1f1f;transform:scaleX(0.9);transform-origin:0 0;">contra superficies ásperas, contra objetos filosos y agudos.</div>
<svg style="position:absolute;left:243.40px;top:250.80px" width="3" height="3"><circle cx="1.5" cy="1.5" r="1.35" fill="#1f1f1f"/></svg>
<div style="position:absolute;left:256.00px;top:247.86px;width:215.78px;font-size:8.0px;line-height:9.192px;color:#1f1f1f;white-space:nowrap;-webkit-text-stroke:0.3px #1f1f1f;transform:scaleX(0.9);transform-origin:0 0;text-align:justify;text-align-last:justify;"><b style="text-decoration:underline;text-underline-offset:0.8px;letter-spacing:-0.42px;">GUANTES DE CARNAZA Y CUERO:</b> Son guantes fabricados</div>
<div style="position:absolute;left:256.00px;top:258.86px;width:215.78px;font-size:8.0px;line-height:9.192px;color:#1f1f1f;white-space:nowrap;-webkit-text-stroke:0.3px #1f1f1f;transform:scaleX(0.9);transform-origin:0 0;text-align:justify;text-align-last:justify;">en cuero de bovino por proceso de curtición al cromo.</div>
<div style="position:absolute;left:256.00px;top:269.01px;width:215.78px;font-size:8.0px;line-height:9.192px;color:#1f1f1f;white-space:nowrap;-webkit-text-stroke:0.3px #1f1f1f;transform:scaleX(0.9);transform-origin:0 0;">Algunos tienen forros de lanilla, algodón, o espuma.</div>
<svg style="position:absolute;left:243.40px;top:282.10px" width="3" height="3"><circle cx="1.5" cy="1.5" r="1.35" fill="#1f1f1f"/></svg>
<div style="position:absolute;left:256.00px;top:279.16px;width:215.78px;font-size:8.0px;line-height:9.192px;color:#1f1f1f;white-space:nowrap;-webkit-text-stroke:0.3px #1f1f1f;transform:scaleX(0.9);transform-origin:0 0;text-align:justify;text-align-last:justify;"><b style="text-decoration:underline;text-underline-offset:0.8px;letter-spacing:-0.42px;">GUANTES DIELÉCTRICOS:</b> Es un guante en elastómero que</div>
<div style="position:absolute;left:256.00px;top:289.31px;width:215.78px;font-size:8.0px;line-height:9.192px;color:#1f1f1f;white-space:nowrap;-webkit-text-stroke:0.3px #1f1f1f;transform:scaleX(0.9);transform-origin:0 0;text-align:justify;text-align-last:justify;">ofrece resistencia al paso de la corriente, para lo cual son</div>
<div style="position:absolute;left:256.00px;top:299.46px;width:215.78px;font-size:8.0px;line-height:9.192px;color:#1f1f1f;white-space:nowrap;-webkit-text-stroke:0.3px #1f1f1f;transform:scaleX(0.9);transform-origin:0 0;">fabricados en un proceso sin costuras.</div>
<svg style="position:absolute;left:243.40px;top:312.55px" width="3" height="3"><circle cx="1.5" cy="1.5" r="1.35" fill="#1f1f1f"/></svg>
<div style="position:absolute;left:256.00px;top:309.61px;width:215.78px;font-size:8.0px;line-height:9.192px;color:#1f1f1f;white-space:nowrap;-webkit-text-stroke:0.3px #1f1f1f;transform:scaleX(0.9);transform-origin:0 0;text-align:justify;text-align-last:justify;"><b style="text-decoration:underline;text-underline-offset:0.8px;letter-spacing:-0.42px;">GUANTES NEOPRENO:</b> Con resistencia al tacto y mayor</div>
<div style="position:absolute;left:256.00px;top:319.76px;width:215.78px;font-size:8.0px;line-height:9.192px;color:#1f1f1f;white-space:nowrap;-webkit-text-stroke:0.3px #1f1f1f;transform:scaleX(0.9);transform-origin:0 0;text-align:justify;text-align-last:justify;">quimio resistencia, se usa en procesos con alcoholes,</div>
<div style="position:absolute;left:256.00px;top:329.91px;width:215.78px;font-size:8.0px;line-height:9.192px;color:#1f1f1f;white-space:nowrap;-webkit-text-stroke:0.3px #1f1f1f;transform:scaleX(0.9);transform-origin:0 0;text-align:justify;text-align-last:justify;">aceites, grasas animales, tintas, solventes, sustancias</div>
<div style="position:absolute;left:256.00px;top:340.06px;width:215.78px;font-size:8.0px;line-height:9.192px;color:#1f1f1f;white-space:nowrap;-webkit-text-stroke:0.3px #1f1f1f;transform:scaleX(0.9);transform-origin:0 0;">engrasadoras, detergentes, fertilizantes.</div>
<svg style="position:absolute;left:243.40px;top:353.15px" width="3" height="3"><circle cx="1.5" cy="1.5" r="1.35" fill="#1f1f1f"/></svg>
<div style="position:absolute;left:256.00px;top:350.21px;width:215.78px;font-size:8.0px;line-height:9.192px;color:#1f1f1f;white-space:nowrap;-webkit-text-stroke:0.3px #1f1f1f;transform:scaleX(0.9);transform-origin:0 0;text-align:justify;text-align-last:justify;"><b style="text-decoration:underline;text-underline-offset:0.8px;letter-spacing:-0.42px;">GUANTES NITRILO:</b> Tiene excelente resistencia a productos</div>
<div style="position:absolute;left:256.00px;top:360.36px;width:215.78px;font-size:8.0px;line-height:9.192px;color:#1f1f1f;white-space:nowrap;-webkit-text-stroke:0.3px #1f1f1f;transform:scaleX(0.9);transform-origin:0 0;text-align:justify;text-align-last:justify;">químicos peligrosos, solventes, aceites, ácidos, grasas,</div>
<div style="position:absolute;left:256.00px;top:370.51px;width:215.78px;font-size:8.0px;line-height:9.192px;color:#1f1f1f;white-space:nowrap;-webkit-text-stroke:0.3px #1f1f1f;transform:scaleX(0.9);transform-origin:0 0;">derivados del petróleo.</div>
<svg style="position:absolute;left:243.40px;top:383.60px" width="3" height="3"><circle cx="1.5" cy="1.5" r="1.35" fill="#1f1f1f"/></svg>
<div style="position:absolute;left:256.00px;top:380.66px;width:215.78px;font-size:8.0px;line-height:9.192px;color:#1f1f1f;white-space:nowrap;-webkit-text-stroke:0.3px #1f1f1f;transform:scaleX(0.9);transform-origin:0 0;text-align:justify;text-align-last:justify;"><b style="text-decoration:underline;text-underline-offset:0.8px;letter-spacing:-0.42px;">GUANTES METÁLICOS:</b> Son guantes de malla para</div>
<div style="position:absolute;left:256.00px;top:390.81px;width:215.78px;font-size:8.0px;line-height:9.192px;color:#1f1f1f;white-space:nowrap;-webkit-text-stroke:0.3px #1f1f1f;transform:scaleX(0.9);transform-origin:0 0;">protegerse contra cortes y heridas.</div>
<div style="position:absolute;left:160.80px;width:600px;text-align:center;top:467.19px;font-size:7.3px;line-height:8.388px;color:#1a1a1a;font-weight:bold;white-space:nowrap;letter-spacing:-0.2px;">USOS</div>
<div style="position:absolute;left:243.20px;top:478.76px;width:477.11px;font-size:8.0px;line-height:9.192px;color:#1f1f1f;white-space:nowrap;-webkit-text-stroke:0.3px #1f1f1f;transform:scaleX(0.9);transform-origin:0 0;text-align:justify;text-align-last:justify;">El usuario hará una utilización apropiada del equipo y con conocimiento de riesgo, respetando las indicaciones del fabricante y de</div>
<div style="position:absolute;left:243.20px;top:488.76px;width:477.11px;font-size:8.0px;line-height:9.192px;color:#1f1f1f;white-space:nowrap;-webkit-text-stroke:0.3px #1f1f1f;transform:scaleX(0.9);transform-origin:0 0;">los responsables de seguridad.</div>
<div style="position:absolute;left:243.20px;top:508.76px;width:477.11px;font-size:8.0px;line-height:9.192px;color:#1f1f1f;white-space:nowrap;-webkit-text-stroke:0.3px #1f1f1f;transform:scaleX(0.9);transform-origin:0 0;">Dependiendo del trabajo a realizar, favor tenga en cuenta:</div>
<svg style="position:absolute;left:243.70px;top:525.20px" width="3" height="3"><circle cx="1.5" cy="1.5" r="1.35" fill="#1f1f1f"/></svg>
<div style="position:absolute;left:255.80px;top:522.26px;width:463.11px;font-size:8.0px;line-height:9.192px;color:#1f1f1f;white-space:nowrap;-webkit-text-stroke:0.3px #1f1f1f;transform:scaleX(0.9);transform-origin:0 0;text-align:justify;text-align-last:justify;"><b style="text-decoration:underline;text-underline-offset:0.8px;letter-spacing:-0.42px;">GUANTES DE CARNAZA Y CUERO:</b> Este tipo de guantes son útiles sobre todo para protegerse de las agresiones mecánicas y en</div>
<div style="position:absolute;left:255.80px;top:533.36px;width:463.11px;font-size:8.0px;line-height:9.192px;color:#1f1f1f;white-space:nowrap;-webkit-text-stroke:0.3px #1f1f1f;transform:scaleX(0.9);transform-origin:0 0;text-align:justify;text-align-last:justify;">medios secos. En medios húmedos pueden ser traspasados por algunos irritantes y alergenos químicos por lo que no confieren</div>
<div style="position:absolute;left:255.80px;top:543.46px;width:463.11px;font-size:8.0px;line-height:9.192px;color:#1f1f1f;white-space:nowrap;-webkit-text-stroke:0.3px #1f1f1f;transform:scaleX(0.9);transform-origin:0 0;">una protección eficaz.</div>
<svg style="position:absolute;left:243.70px;top:556.60px" width="3" height="3"><circle cx="1.5" cy="1.5" r="1.35" fill="#1f1f1f"/></svg>
<div style="position:absolute;left:255.80px;top:553.66px;width:463.11px;font-size:8.0px;line-height:9.192px;color:#1f1f1f;white-space:nowrap;-webkit-text-stroke:0.3px #1f1f1f;transform:scaleX(0.9);transform-origin:0 0;"><b style="text-decoration:underline;text-underline-offset:0.8px;letter-spacing:-0.42px;">GUANTES DIELÉCTRICOS:</b> Para uso en trabajos con corriente eléctrica (media y alta tensión).</div>
<svg style="position:absolute;left:243.70px;top:566.70px" width="3" height="3"><circle cx="1.5" cy="1.5" r="1.35" fill="#1f1f1f"/></svg>
<div style="position:absolute;left:255.80px;top:563.76px;width:463.11px;font-size:8.0px;line-height:9.192px;color:#1f1f1f;white-space:nowrap;-webkit-text-stroke:0.3px #1f1f1f;transform:scaleX(0.9);transform-origin:0 0;text-align:justify;text-align-last:justify;"><b style="text-decoration:underline;text-underline-offset:0.8px;letter-spacing:-0.42px;">GUANTES PLÁSTICOS:</b> Son, en general, los más adecuados, ya que además de proteger contra gran variedad de sustancias</div>
<svg style="position:absolute;left:0;top:0;overflow:visible" width="887" height="568">
<defs><filter id="bl" x="-10%" y="-10%" width="120%" height="120%"><feGaussianBlur stdDeviation="0.45"/></filter><linearGradient id="gy" x1="0" y1="0" x2="1" y2="0"><stop offset="0" stop-color="#dfa60e"/><stop offset=".45" stop-color="#f4c024"/><stop offset="1" stop-color="#d99f08"/></linearGradient><linearGradient id="gl" x1="0" y1="0" x2="1" y2="1"><stop offset="0" stop-color="#c6c6c6"/><stop offset=".6" stop-color="#b4b4b4"/><stop offset="1" stop-color="#a0a0a0"/></linearGradient><linearGradient id="gk" x1="0" y1="0" x2="1" y2="0.3"><stop offset="0" stop-color="#3e4644"/><stop offset=".5" stop-color="#4c5452"/><stop offset="1" stop-color="#262b2a"/></linearGradient><linearGradient id="gm" x1="0" y1="0" x2="1" y2="0"><stop offset="0" stop-color="#7b6e67"/><stop offset="1" stop-color="#95887f"/></linearGradient></defs>
<g filter="url(#bl)">
<path d="M474.0 265.0 C476.2 264.9 485.8 267.7 488.0 269.0 C490.2 270.3 494.0 274.2 496.0 278.0 C498.0 281.8 508.4 304.1 508.2 306.5 C508.0 308.9 496.9 302.9 494.0 302.0 C491.1 301.1 481.6 298.5 479.0 297.5 C476.4 296.5 469.3 294.8 468.0 292.0 C466.7 289.2 465.4 272.7 466.0 270.0 C466.6 267.3 471.8 265.1 474.0 265.0Z" fill="#999999" />
<path d="M468.6 264.8 L487.3 271.8" stroke="#8e8e8e" stroke-width="7.56" stroke-linecap="round" fill="none" opacity="1"/>
<path d="M463.0 271.2 L487.3 277.3" stroke="#888" stroke-width="7.56" stroke-linecap="round" fill="none" opacity="1"/>
<path d="M460.6 279.4 L487.3 284.3" stroke="#8e8e8e" stroke-width="7.56" stroke-linecap="round" fill="none" opacity="1"/>
<path d="M463.5 288.2 L486.0 290.5" stroke="#868686" stroke-width="6.83" stroke-linecap="round" fill="none" opacity="1"/>
<path d="M492.0 272.0 C492.7 269.0 517.6 259.3 520.0 259.0 C522.4 258.7 525.7 264.0 528.0 268.0 C530.3 272.0 552.5 315.6 554.0 319.5 C555.5 323.4 552.2 325.9 550.0 327.0 C547.8 328.1 523.4 337.5 520.7 336.0 C518.0 334.5 511.5 308.3 509.6 304.0 C507.7 299.7 491.3 275.0 492.0 272.0Z" fill="url(#gl)" />
<path d="M488.5 263.8 L500.5 286.0" stroke="#c2c2c2" stroke-width="8.78" stroke-linecap="round" fill="none" opacity="1"/>
<path d="M497.0 257.5 L507.5 281.0" stroke="#bcbcbc" stroke-width="8.78" stroke-linecap="round" fill="none" opacity="1"/>
<path d="M505.4 254.6 L514.5 278.0" stroke="#c0c0c0" stroke-width="8.78" stroke-linecap="round" fill="none" opacity="1"/>
<path d="M514.2 252.0 L523.0 276.0" stroke="#b8b8b8" stroke-width="8.78" stroke-linecap="round" fill="none" opacity="1"/>
<path d="M493.0 261.0 L503.0 283.0" stroke="#a3a3a3" stroke-width="0.8" opacity="0.7" fill="none" stroke-linecap="round"/>
<path d="M501.0 256.0 L510.0 279.0" stroke="#a3a3a3" stroke-width="0.8" opacity="0.7" fill="none" stroke-linecap="round"/>
<path d="M510.0 253.0 L518.5 276.0" stroke="#a3a3a3" stroke-width="0.8" opacity="0.7" fill="none" stroke-linecap="round"/>
<path d="M593.0 262.0 C594.5 260.1 614.0 260.2 615.5 262.0 C617.0 263.8 615.2 283.9 615.2 289.0 C615.2 294.1 618.0 335.4 616.2 338.7 C614.4 342.0 590.0 341.9 588.5 338.7 C587.0 335.5 593.3 295.7 593.6 290.6 C593.9 285.5 591.5 263.9 593.0 262.0Z" fill="url(#gy)" />
<path d="M595.2 259.0 L595.8 275.0" stroke="#e4ab12" stroke-width="6.59" stroke-linecap="round" fill="none" opacity="1"/>
<path d="M600.9 252.5 L600.6 275.0" stroke="#efb91c" stroke-width="6.83" stroke-linecap="round" fill="none" opacity="1"/>
<path d="M607.6 249.0 L607.2 275.0" stroke="#f3bf24" stroke-width="6.83" stroke-linecap="round" fill="none" opacity="1"/>
<path d="M613.6 253.0 L612.5 275.0" stroke="#e7ae14" stroke-width="6.59" stroke-linecap="round" fill="none" opacity="1"/>
<path d="M617.2 267.0 L614.7 284.5" stroke="#e9b116" stroke-width="6.34" stroke-linecap="round" fill="none" opacity="1"/>
<path d="M627.1 262.0 C628.5 259.7 646.3 259.7 647.5 262.0 C648.7 264.3 644.9 291.3 645.4 296.4 C645.9 301.5 656.1 335.3 654.8 338.0 C653.5 340.7 628.2 340.0 626.4 337.2 C624.6 334.4 627.1 301.4 627.1 296.4 C627.1 291.4 625.7 264.3 627.1 262.0Z" fill="url(#gy)" />
<path d="M624.0 259.5 L628.0 279.0" stroke="#e3aa12" stroke-width="6.34" stroke-linecap="round" fill="none" opacity="1"/>
<path d="M629.6 254.5 L631.8 275.0" stroke="#ebb41a" stroke-width="6.59" stroke-linecap="round" fill="none" opacity="1"/>
<path d="M635.2 249.5 L636.0 275.0" stroke="#f2be22" stroke-width="6.83" stroke-linecap="round" fill="none" opacity="1"/>
<path d="M641.0 250.5 L641.0 275.0" stroke="#eeb91e" stroke-width="6.83" stroke-linecap="round" fill="none" opacity="1"/>
<path d="M645.7 256.0 L644.8 275.0" stroke="#e0a80e" stroke-width="6.59" stroke-linecap="round" fill="none" opacity="1"/>
<path d="M493.5 401.0 C493.9 399.1 517.1 391.2 518.5 392.5 C519.9 393.8 535.2 437.1 534.8 439.0 C534.4 440.9 507.0 450.7 505.6 449.4 C504.2 448.1 493.1 402.9 493.5 401.0Z" fill="#2f3634" />
<path d="M485.5 368.0 C488.0 364.8 509.9 358.2 513.0 359.0 C516.1 359.8 516.0 372.2 516.5 376.0 C517.0 379.8 520.0 393.7 518.0 396.5 C516.0 399.3 500.0 404.6 497.0 404.0 C494.0 403.4 489.5 394.6 488.4 391.0 C487.2 387.4 483.0 371.2 485.5 368.0Z" fill="#3c4543" />
<path d="M480.2 371.8 L492.5 393.0" stroke="#3c4543" stroke-width="7.81" stroke-linecap="round" fill="none" opacity="1"/>
<path d="M487.8 352.0 L494.4 376.0" stroke="#3d4644" stroke-width="7.56" stroke-linecap="round" fill="none" opacity="1"/>
<path d="M493.4 347.3 L499.5 375.0" stroke="#414a48" stroke-width="7.56" stroke-linecap="round" fill="none" opacity="1"/>
<path d="M499.5 349.0 L504.0 375.0" stroke="#3e4745" stroke-width="7.32" stroke-linecap="round" fill="none" opacity="1"/>
<path d="M508.5 354.0 L510.7 376.0" stroke="#3a4341" stroke-width="7.08" stroke-linecap="round" fill="none" opacity="1"/>
<path d="M561.4 373.0 C562.4 372.1 580.3 373.4 581.2 374.7 C582.1 376.0 579.6 398.7 578.6 399.6 C577.6 400.5 562.3 394.0 561.4 392.7 C560.5 391.4 560.4 373.9 561.4 373.0Z" fill="#d4a27c" />
<path d="M561.4 386.0 C562.3 385.9 577.7 389.3 578.6 390.0 C579.5 390.7 579.5 399.5 578.6 399.6 C577.7 399.7 562.3 393.4 561.4 392.7 C560.5 392.0 560.5 386.1 561.4 386.0Z" fill="#a58166" opacity=".7"/>
<path d="M591.5 382.4 C595.9 381.2 627.5 385.6 632.0 389.0 C636.5 392.4 636.2 412.1 636.0 416.0 C635.8 419.9 632.7 427.1 630.0 428.0 C627.3 428.9 612.2 427.2 608.7 425.4 C605.2 423.6 597.1 412.4 595.0 410.0 C592.9 407.6 588.4 404.1 588.0 401.3 C587.6 398.5 587.1 383.6 591.5 382.4Z" fill="url(#gm)" />
<path d="M624.0 392.5 L649.5 396.0" stroke="#8a7d75" stroke-width="8.0" stroke-linecap="round" fill="none" opacity="1"/>
<path d="M622.0 402.0 L656.5 407.5" stroke="#8f827a" stroke-width="8.4" stroke-linecap="round" fill="none" opacity="1"/>
<path d="M619.0 413.0 L656.5 421.5" stroke="#8c7f77" stroke-width="8.4" stroke-linecap="round" fill="none" opacity="1"/>
<path d="M615.6 422.0 L646.0 431.5" stroke="#877a72" stroke-width="8.0" stroke-linecap="round" fill="none" opacity="1"/>
<path d="M601.0 414.0 L619.5 437.5" stroke="#83766e" stroke-width="8.4" stroke-linecap="round" fill="none" opacity="1"/>
<path d="M580.3 379.0 C580.8 378.4 593.8 381.6 594.1 382.4 C594.4 383.2 590.3 402.4 589.8 403.0 C589.3 403.6 578.9 400.4 578.6 399.6 C578.3 398.8 579.8 379.6 580.3 379.0Z" fill="#8a827c" />
<path d="M582.5 384.5 C582.8 384.1 590.1 386.0 590.3 386.5 C590.5 387.0 588.1 398.6 587.8 399.0 C587.5 399.4 580.7 397.5 580.5 397.0 C580.3 396.5 582.2 384.9 582.5 384.5Z" fill="#d8d1c8" opacity=".85"/>
</g></svg>
</div>
<div style="position:absolute;left:592px;top:43px;width:96px;height:18px;background:#070808;border-radius:0 0 5px 5px;"></div>
<div style="position:absolute;left:636px;top:46px;width:8px;height:8px;border-radius:50%;background:radial-gradient(circle,#1f1f1f,#101010 60%,#080808);"></div>
</body></html>
